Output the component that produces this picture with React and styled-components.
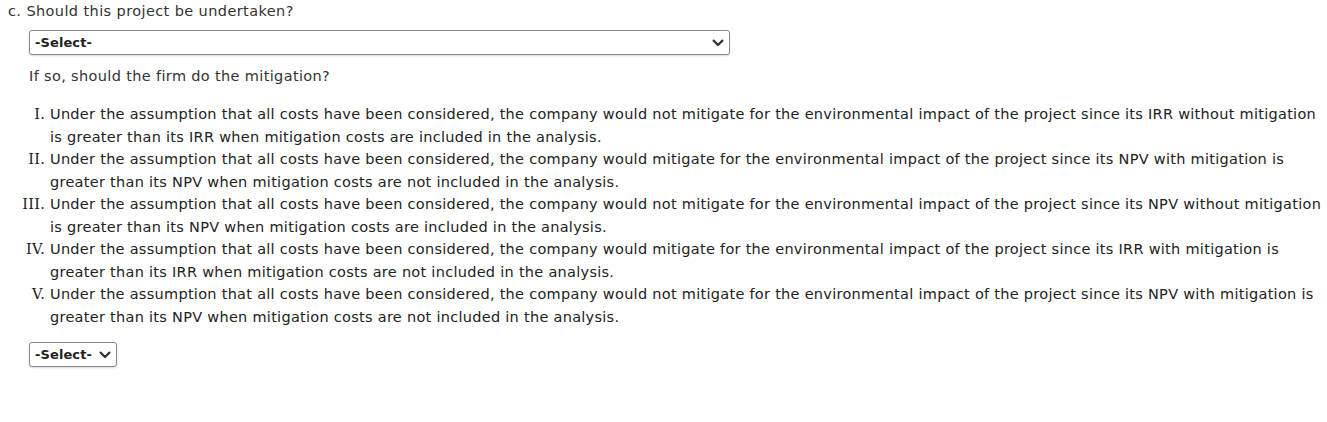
import React from "react";
import styled, { createGlobalStyle } from "styled-components";

const GlobalStyle = createGlobalStyle`
  body {
    margin: 0;
    background: #ffffff;
    font-family: "DejaVu Sans", Verdana, sans-serif;
    color: #222;
  }
`;

// each option is kept on the same two lines as the original page
const options = [
  [
    "Under the assumption that all costs have been considered, the company would not mitigate for the environmental impact of the project since its IRR without mitigation",
    "is greater than its IRR when mitigation costs are included in the analysis.",
  ],
  [
    "Under the assumption that all costs have been considered, the company would mitigate for the environmental impact of the project since its NPV with mitigation is",
    "greater than its NPV when mitigation costs are not included in the analysis.",
  ],
  [
    "Under the assumption that all costs have been considered, the company would not mitigate for the environmental impact of the project since its NPV without mitigation",
    "is greater than its NPV when mitigation costs are included in the analysis.",
  ],
  [
    "Under the assumption that all costs have been considered, the company would mitigate for the environmental impact of the project since its IRR with mitigation is",
    "greater than its IRR when mitigation costs are not included in the analysis.",
  ],
  [
    "Under the assumption that all costs have been considered, the company would not mitigate for the environmental impact of the project since its NPV with mitigation is",
    "greater than its NPV when mitigation costs are not included in the analysis.",
  ],
];

function Chevron() {
  return (
    <svg width="12" height="8" viewBox="0 0 12 8">
      <path
        d="M1.6 1.6 L6 6 L10.4 1.6"
        fill="none"
        stroke="#333"
        strokeWidth="2.2"
        strokeLinecap="round"
        strokeLinejoin="round"
      />
    </svg>
  );
}

function App() {
  return (
    <Page>
      <GlobalStyle />
      <Question>c. Should this project be undertaken?</Question>
      <Indented>
        <SelectBox $wide>
          <SelectLabel>-Select-</SelectLabel>
          <Chevron />
        </SelectBox>
        <SubQuestion>If so, should the firm do the mitigation?</SubQuestion>
      </Indented>
      <OptionList type="I">
        {options.map((lines, i) => (
          <OptionItem key={i}>
            {lines.map((line, j) => (
              <Line key={j}>{line}</Line>
            ))}
          </OptionItem>
        ))}
      </OptionList>
      <Indented>
        <SelectBox>
          <SelectLabel>-Select-</SelectLabel>
          <Chevron />
        </SelectBox>
      </Indented>
    </Page>
  );
}

const Page = styled.div`
  padding: 2px 0 40px 8px;
  font-size: 14.5px;
  letter-spacing: 0.28px;
`;

const Question = styled.div`
  color: #333;
  line-height: 18px;
  letter-spacing: 0.4px;
`;

const Indented = styled.div`
  padding-left: 21px;
`;

const SelectBox = styled.div`
  box-sizing: border-box;
  margin-top: 10px;
  width: ${(p) => (p.$wide ? "701px" : "88px")};
  height: 25px;
  display: flex;
  align-items: center;
  justify-content: space-between;
  padding: 0 5px 0 5px;
  border: 1px solid #8a8a8a;
  border-radius: 3px;
  background: #fff;
  box-shadow: 0 1px 2px rgba(0, 0, 0, 0.15);
`;

const SelectLabel = styled.span`
  font-weight: bold;
  font-size: 13px;
  letter-spacing: 0.1px;
  color: #222;
`;

const SubQuestion = styled.div`
  margin-top: 12px;
  color: #333;
  line-height: 18px;
  letter-spacing: 0.35px;
`;

const OptionList = styled.ol`
  margin: 18px 0 14px;
  padding-left: 42px;
  line-height: 22.5px;
  color: #222;
`;

const OptionItem = styled.li`
  &::marker {
    font-family: "DejaVu Serif", serif;
  }
`;

const Line = styled.span`
  display: block;
  white-space: nowrap;
`;

export default App;
